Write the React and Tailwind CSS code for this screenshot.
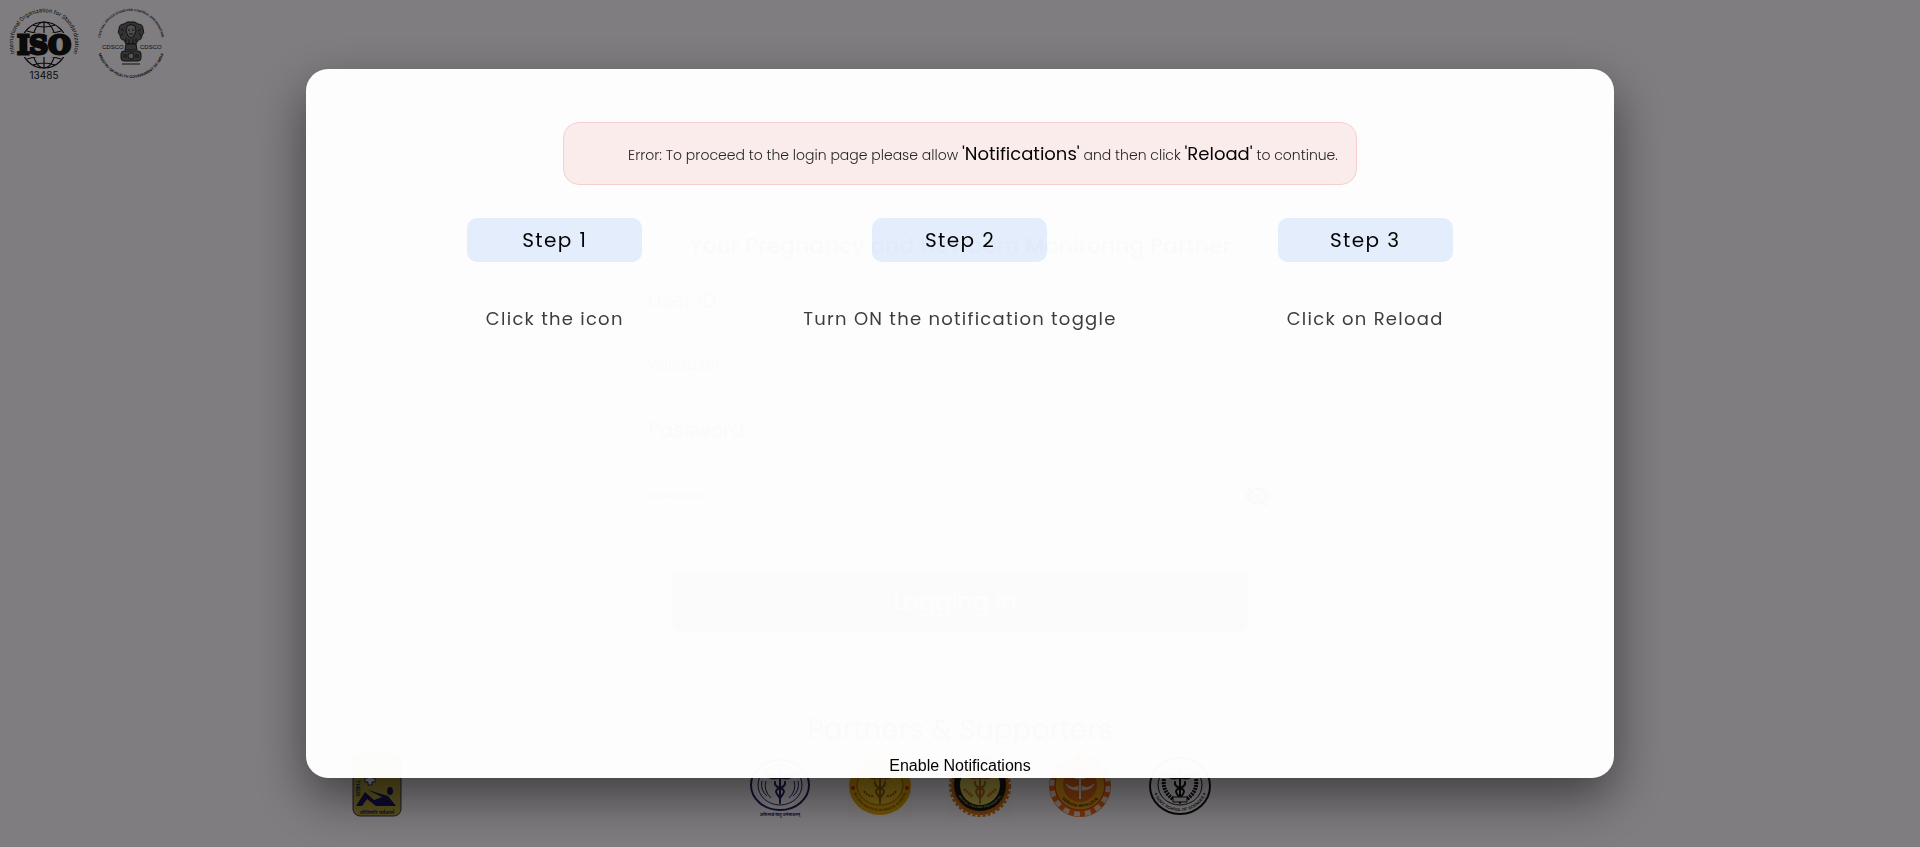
import { MdVisibilityOff } from "react-icons/md";

const ink = "#141414";

function IsoLogo() {
  return (
    <svg viewBox="0 0 80 80" className="h-20 w-20" role="img" aria-label="ISO 13485">
      <defs>
        <path id="iso-arc" d="M 13 54.500 A 31 31 0 1 1 67 54.500" />
      </defs>
      <g fill="none" stroke={ink} strokeWidth="1.2">
        <circle cx="40" cy="41" r="23" />
        <ellipse cx="40" cy="41" rx="12" ry="23" />
        <path d="M40 18v46M23 27q17 6 34 0M23 55q17 -6 34 0M29 21q11 4 22 0M29 61q11 -4 22 0" />
      </g>
      <rect x="11" y="29" width="60" height="24" fill="#fffaff" />
      <text x="40" y="50" textAnchor="middle" fontFamily="DejaVu Serif" fontWeight="700" fontSize="26" fill={ink} stroke={ink} strokeWidth="3">ISO</text>
      <text fontFamily="Roboto" fontSize="5.8" fill={ink} textAnchor="middle">
        <textPath href="#iso-arc" startOffset="50%">International Organization for Standardization</textPath>
      </text>
      <text x="40" y="75" textAnchor="middle" fontFamily="Inter" fontSize="10" fill={ink}>13485</text>
    </svg>
  );
}

function CdscoLogo() {
  return (
    <svg viewBox="0 0 80 80" className="h-20 w-20" role="img" aria-label="CDSCO">
      <defs>
        <path id="cd-top" d="M 8 38 A 31 31 0 0 1 70 38" />
        <path id="cd-bot" d="M 5 40 A 34 34 0 0 0 73 40" />
      </defs>
      <g fontFamily="Liberation Sans" fontWeight="700" fill="#222" textAnchor="middle">
        <text fontSize="3.2">
          <textPath href="#cd-top" startOffset="50%">CENTRAL DRUGS STANDARD CONTROL ORGANISATION</textPath>
        </text>
        <text fontSize="3.8">
          <textPath href="#cd-bot" startOffset="50%">MINISTRY OF HEALTH GOVERNMENT OF INDIA</textPath>
        </text>
      </g>
      <text x="10" y="45" fontFamily="Liberation Sans" fontSize="6" fill={ink}>CDSCO</text>
      <text x="48" y="45" fontFamily="Liberation Sans" fontSize="6" fill={ink}>CDSCO</text>
      <g fill="#666" stroke="#222" strokeWidth="1">
        <path d="M32 20q3-3 7-2q4-1 7 2q5 0 5 5q2 4-1 6q0 5-4 5l-2 4H34l-2-4q-4 0-4-5q-3-2-1-6q0-5 5-5z" />
        <path d="M35 22q4-3 8 0l1 5-2 5-3 2-3-2-2-5z" fill="#999" />
        <path d="M29 25l3 2M31 29l-2 3M49 25l-3 2M47 29l2 3M36 26h2M40 26h2M37 30h4M34 34v4M37 35v5M41 35v5M44 34v4" fill="none" />
        <path d="M34 40l-1 6h12l-1-6z" />
        <rect x="29" y="47" width="20" height="10" rx="3" />
        <circle cx="39" cy="52" r="3" fill="#aaa" />
        <path d="M32 50v4M34 50v4M44 50v4M46 50v4M30 60h18" />
      </g>
    </svg>
  );
}

function Staff({ color }) {
  return (
    <g fill="none" stroke={color} strokeWidth="2" strokeLinecap="round">
      <path d="M32 16v33" />
      <path d="M32 24c-3-3-8-5-15-4 3 5 9 6 15 4c6 2 12 1 15-4c-7-1-12 1-15 4" fill={color} strokeWidth="1" />
      <path d="M27 28q-1 4 5 6t3 6-3 5M37 28q1 4-5 6t-3 6 3 5" />
    </g>
  );
}

function RingText({ id, text, color, size = 5, r = 25 }) {
  return (
    <>
      <defs>
        <path id={id} d={`M ${32 - r} 32 A ${r} ${r - 2} 0 0 0 ${32 + r} 32`} />
      </defs>
      <text fontFamily="Liberation Sans" fontWeight="700" fontSize={size} fill={color} textAnchor="middle">
        <textPath href={`#${id}`} startOffset="50%">{text}</textPath>
      </text>
    </>
  );
}

function Seal({ label, children }) {
  return (
    <svg viewBox="0 0 64 64" className="h-16 w-16 shrink-0" role="img" aria-label={label}>
      {children}
    </svg>
  );
}

function ReliefLogo() {
  return (
    <svg viewBox="0 0 50 64" className="h-16 w-[50px] shrink-0" role="img" aria-label="Physiotherapy institute">
      <rect x="1" y="1" width="48" height="61" rx="7" fill="#b3a13f" stroke="#37305c" />
      <path d="M13 24h3v-3h4v3h3v4h-3v3h-4v-3h-3z" fill="#eee" stroke="#28206a" />
      <text transform="translate(4 26) rotate(90)" fontFamily="Liberation Sans" fontWeight="700" fontSize="6" fill="#28206a">THER</text>
      <ellipse cx="38" cy="37" rx="3" ry="4" fill="#1d1663" />
      <path d="M4 52l9-14 9 8 8-3-14-7 20 6 8 10H24l-9-7-5 7z" fill="#1d1663" />
      <text x="25" y="60" textAnchor="middle" fontFamily="Noto Sans, sans-serif" fontWeight="700" fontSize="5" fill="#28206a">जीतिमति पर्यवार्तां</text>
    </svg>
  );
}

function Partners() {
  return (
    <div className="flex gap-9">
      <Seal label="Medical institute">
        <ellipse cx="32" cy="31" rx="29" ry="25" fill="none" stroke="#28206a" strokeWidth="2" />
        <ellipse cx="32" cy="31" rx="22" ry="20" fill="none" stroke="#28206a" />
        <Staff color="#28206a" />
        <path d="M18 27q-3 9 5 17M14 27q-2 9 5 15M46 27q3 9-5 17M50 27q2 9-5 15" fill="none" stroke="#28206a" />
        <text x="32" y="62" textAnchor="middle" fontFamily="Noto Sans, sans-serif" fontWeight="700" fontSize="4" fill="#28206a">शरीरमाद्यं खलु धर्मसाधनम्</text>
      </Seal>
      <Seal label="All India Institute of Medical Sciences">
        <rect y="4" width="64" height="59" fill="#fdf6f8" />
        <ellipse cx="32" cy="32" rx="31" ry="29" fill="#e8a90c" />
        <ellipse cx="32" cy="31" rx="23" ry="20" fill="#f0bb25" stroke="#9b6500" />
        <Staff color="#8c6415" />
        <path d="M16 37q4 6 10 5M48 37q-4 6-10 5" fill="none" stroke="#8c6415" strokeWidth="2" strokeDasharray="2 1" />
        <circle cx="5" cy="34" r="2" fill="#d22" />
        <circle cx="59" cy="34" r="2" fill="#d22" />
        <RingText id="aiims" text="ALL INDIA INSTITUTE OF MEDICAL SCIENCES" color="#59420f" size={3} r={27} />
      </Seal>
      <Seal label="Medical college">
        <rect y="4" width="64" height="59" fill="#fdf6f8" />
        <circle cx="32" cy="32" r="29" fill="#c86a12" stroke="#d97a1a" strokeWidth="4" strokeDasharray="3 2" />
        <circle cx="32" cy="31" r="26" fill="#171717" />
        <circle cx="32" cy="31" r="20" fill="#ded05b" />
        <Staff color="#b5641e" />
        <path d="M16 35l9 8M48 35l-9 8" stroke="#e26a20" strokeWidth="3" strokeDasharray="2 1" />
        <RingText id="college" text="MEDICAL COLLEGE AND HOSPITAL" color="#bdb675" size={3} r={24} />
      </Seal>
      <Seal label="Service with love">
        <circle cx="32" cy="32" r="31" fill="#ee6a1a" />
        <circle cx="32" cy="32" r="28" fill="none" stroke="#f3d9c6" strokeWidth="5" strokeDasharray="6 5" />
        <circle cx="32" cy="31" r="25" fill="#f5a51b" stroke="#d83a12" />
        <circle cx="32" cy="31" r="17" fill="#e56a18" />
        <path d="M32 17v28M27 24h10" fill="none" stroke="#f5e3d8" strokeWidth="2" />
        <path d="M18 30q6 6 12 2v4q-9 0-12-6M46 30q-6 6-12 2v4q9 0 12-6" fill="#f5e3d8" stroke="#f5e3d8" />
        <RingText id="love" text="SERVICE WITH LOVE" color="#30200b" size={4} r={23} />
      </Seal>
      <Seal label="Government medical college">
        <ellipse cx="32" cy="32" rx="30" ry="28" fill="none" stroke={ink} strokeWidth="2" />
        <ellipse cx="32" cy="31" rx="22" ry="20" fill="none" stroke={ink} />
        <Staff color={ink} />
        <path d="M16 25q-2 12 9 20M48 25q2 12-9 20" fill="none" stroke={ink} strokeWidth="4" strokeDasharray="2 1" />
        <path d="M25 43h14v5H25z" fill="#eee" stroke={ink} />
        <RingText id="govt" text="✦ GOVT. SCHOOL OF SCIENCES ✦" color={ink} size={4} r={27} />
      </Seal>
    </div>
  );
}

function LoginPage() {
  return (
    <div className="flex min-h-screen flex-col bg-[#fffaff]">
      <header className="flex gap-2 px-1 pt-1">
        <IsoLogo />
        <CdscoLogo />
      </header>
      <main className="mx-auto w-full max-w-[640px] pt-36">
        <h1 className="text-center text-[22px] leading-9 font-medium">Your Pregnancy and Newborn Monitoring Partner</h1>
        <form className="pt-5" onSubmit={(e) => e.preventDefault()}>
          <label htmlFor="user" className="block px-2 text-xl leading-8">User ID</label>
          <input id="user" defaultValue="validuser" className="mt-4 block h-16 w-full bg-[#f8f4f8] px-2 text-base" />
          <label htmlFor="pass" className="mt-[18px] block px-2 text-xl leading-8">Password</label>
          <div className="mt-[18px] flex h-16 items-center px-2">
            <input id="pass" type="password" defaultValue="password1" className="min-w-0 flex-1 text-base" />
            <button type="button" aria-label="Show password">
              <MdVisibilityOff size={28} />
            </button>
          </div>
          <div className="px-8 pt-11">
            <button type="submit" className="h-[60px] w-full rounded-lg bg-[#6b6b80] text-2xl text-white">Logging in..</button>
          </div>
        </form>
      </main>
      <section className="pt-[78px]">
        <h2 className="text-center text-[28px] leading-10">Partners &amp; Supporters</h2>
        <div className="flex gap-[346px] pl-[352px] pt-1">
          <ReliefLogo />
          <Partners />
        </div>
      </section>
    </div>
  );
}

const steps = [
  { title: "Step 1", text: "Click the icon" },
  { title: "Step 2", text: "Turn ON the notification toggle" },
  { title: "Step 3", text: "Click on Reload" },
];

export default function App() {
  return (
    <div className="h-screen overflow-hidden font-['Poppins','Inter',sans-serif] text-black">
      <LoginPage />
      <div className="fixed inset-0 flex items-center justify-center bg-black/50">
        <div
          role="dialog"
          aria-modal="true"
          aria-label="Enable notifications"
          className="flex min-h-[709px] w-[68.1%] flex-col items-center rounded-[22px] bg-white pt-[53px] opacity-[.98] shadow-[0_20px_50px_rgba(0,0,0,0.5)]"
        >
          <p className="rounded-2xl border border-[#fbcfcf] bg-[#fdeeee] pt-[17px] pr-[18px] pb-[15px] pl-16 text-sm leading-7 font-light text-[#222]">
            Error: To proceed to the login page please allow <strong className="text-lg leading-7 font-normal text-black">'Notifications'</strong> and then click{" "}
            <strong className="text-lg leading-7 font-normal text-black">'Reload'</strong> to continue.
          </p>
          <ol className="flex w-full justify-evenly pt-[33px]">
            {steps.map((s) => (
              <li key={s.title} className="flex flex-col items-center gap-[41px]">
                <h3 className="w-[175px] rounded-[10px] bg-[#e5effe] text-center text-xl leading-[44px] tracking-[0.07em]">{s.title}</h3>
                <p className="text-lg leading-8 tracking-[0.07em] text-[#3c3c3c]">{s.text}</p>
              </li>
            ))}
          </ol>
          <button type="button" className="mt-auto font-['Liberation_Sans',Arial,sans-serif] text-base leading-6">
            Enable Notifications
          </button>
        </div>
      </div>
    </div>
  );
}
